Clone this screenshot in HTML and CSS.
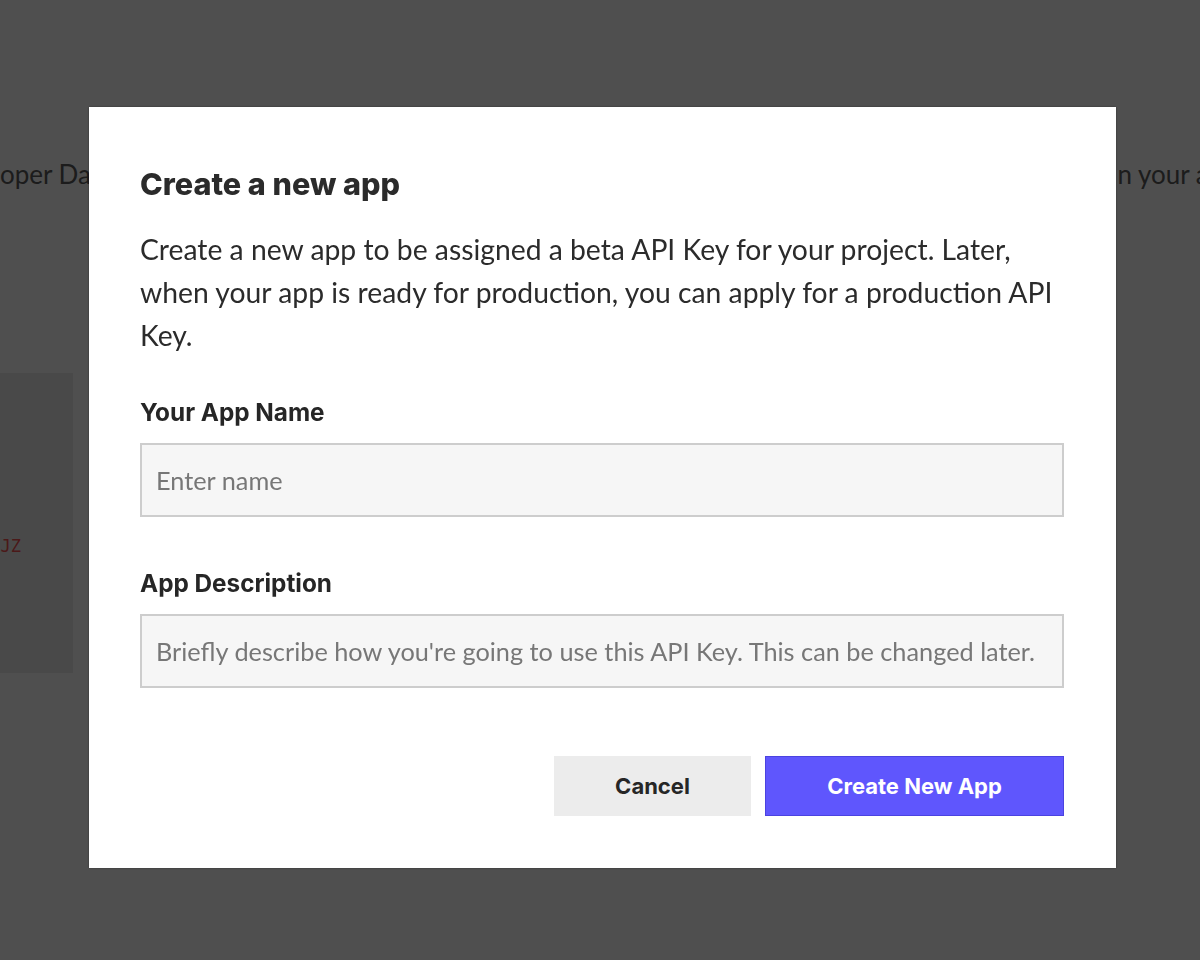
FILE: index.html
```html
<!DOCTYPE html>
<html lang="en">
<head>
    <meta charset="UTF-8">
    <meta name="viewport" content="width=device-width, initial-scale=1.0">
    <title>Developer Dashboard - Create App</title>
    <link rel="stylesheet" href="styles.css">
</head>
<body>

    <div class="page">
        <p class="intro">
            <span>oper Dashboard. Manage the apps</span>
            <span>n your app to start making requests.</span>
        </p>
        <div class="key-card">
            <code>kR82sLq1xJZ</code>
        </div>
    </div>

    <div class="overlay">
        <div class="modal">
            <h2 class="modal-title">Create a new app</h2>
            <p class="modal-text">Create a new app to be assigned a beta API Key for your project. Later, when your app is ready for production, you can apply for a production API Key.</p>

            <form class="app-form" onsubmit="return false">
                <label class="field">
                    <span class="field-label">Your App Name</span>
                    <input type="text" placeholder="Enter name">
                </label>
                <label class="field">
                    <span class="field-label">App Description</span>
                    <input type="text" placeholder="Briefly describe how you're going to use this API Key. This can be changed later.">
                </label>

                <div class="actions">
                    <button type="button" class="btn btn-cancel">Cancel</button>
                    <button type="submit" class="btn btn-primary">Create New App</button>
                </div>
            </form>
        </div>
    </div>

</body>
</html>
```

FILE: styles.css
```css
body {
    margin: 0;
    padding: 0;
    background-color: white;
    font-family: Lato, "Open Sans", sans-serif;
    color: #333;
}

/* page behind the dialog */
.page {
    height: 960px;
    overflow: hidden;
}

.intro {
    display: flex;
    justify-content: space-between;
    margin: 0;
    padding-top: 158px;
    font-size: 26px;
    white-space: nowrap;
    color: #5a5a5a;
}

.intro span:last-child {
    margin-right: -326px;
}

.key-card {
    width: 73px;
    height: 300px;
    margin-top: 183px;
    background-color: #ececec;
    display: flex;
    align-items: center;
    justify-content: flex-end;
    overflow: hidden;
}

.key-card code {
    font-family: "DejaVu Sans Mono", monospace;
    font-size: 17px;
    color: #f05050;
    margin-right: 52px;
    margin-top: 45px;
}

/* dialog */
.overlay {
    position: fixed;
    inset: 0;
    background-color: rgba(0, 0, 0, 0.69);
    display: flex;
    justify-content: center;
    align-items: flex-start;
    padding-top: 107px;
    padding-left: 5px;
}

.modal {
    width: 1027px;
    box-sizing: border-box;
    background-color: white;
    padding: 59px 52px 52px 51px;
    box-shadow: 0 0 2px rgba(0, 0, 0, 0.4);
}

.modal-title {
    margin: 0;
    font-family: Inter, sans-serif;
    font-weight: 800;
    font-size: 30.6px;
    line-height: 36px;
    color: #2b2b2b;
}

.modal-text {
    margin: 26px 0 0;
    font-size: 28.3px;
    line-height: 43px;
    color: #2b2b2b;
}

.field {
    display: block;
    margin-top: 40px;
}

.field + .field {
    margin-top: 51px;
}

.field-label {
    display: block;
    font-family: Inter, sans-serif;
    font-weight: 700;
    font-size: 24.3px;
    line-height: 30px;
    color: #262626;
    margin-bottom: 16px;
}

.field input {
    display: block;
    width: 100%;
    box-sizing: border-box;
    height: 74px;
    padding: 0 14px;
    border: 2px solid #cdcdcd;
    background-color: #f6f6f6;
    font-family: Lato, sans-serif;
    font-size: 25.3px;
    color: #333;
}

.field input::placeholder {
    color: #777;
}

.actions {
    display: flex;
    justify-content: flex-end;
    gap: 14px;
    margin-top: 68px;
}

.btn {
    height: 60px;
    border: none;
    font-family: Inter, sans-serif;
    font-weight: 700;
    font-size: 22px;
    cursor: pointer;
}

.btn-cancel {
    width: 197px;
    background-color: #ececec;
    color: #262626;
}

.btn-primary {
    width: 299px;
    background-color: #5f56fd;
    color: white;
    border: 1px solid #4b43e0;
}
```
